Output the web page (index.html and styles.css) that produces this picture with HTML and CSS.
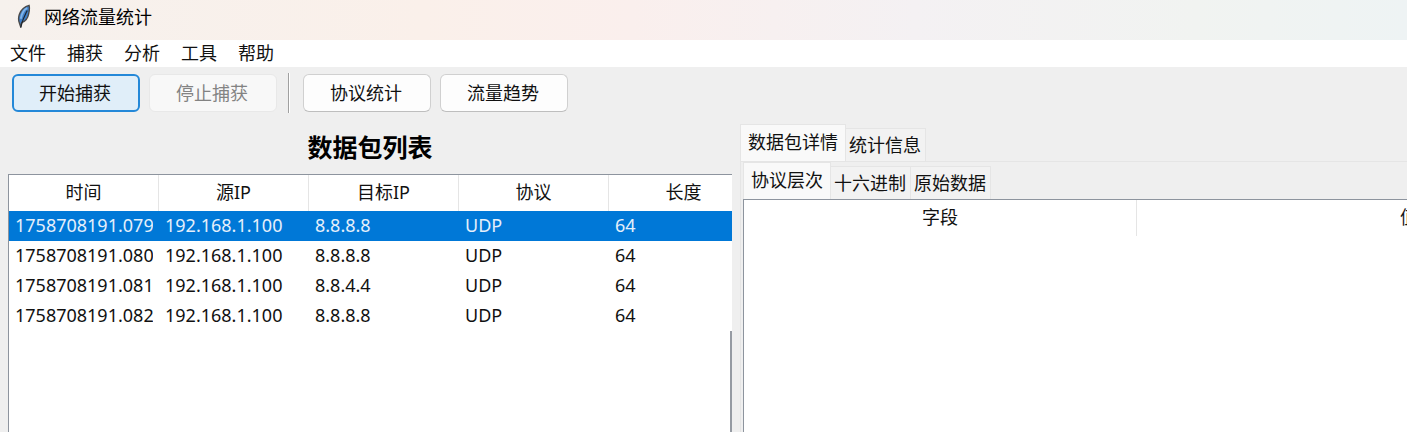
FILE: index.html
```html
<!DOCTYPE html>
<html lang="zh-CN">
<head>
<meta charset="utf-8">
<title>网络流量统计</title>
<link rel="stylesheet" href="styles.css">
</head>
<body>
<div class="window">
  <header class="titlebar">
    <svg class="feather" viewBox="0 0 16 26" aria-hidden="true">
      <path d="M13.5 1.5C9.5 2.5 5 6 3 11C1.800 14.500 2 18 3 20.500L4.500 25L5.500 20C9 19 12 16 13 11C13.800 7.500 14.200 4 13.500 1.500Z" fill="#3f7fc8" stroke="#4a4a4a" stroke-width="1.500"/>
      <path d="M11.500 4.500C8 6 5.500 10 4.500 16" fill="none" stroke="#7fb4ea" stroke-width="2"/>
      <path d="M11.500 7C9.500 11 7 15 4.500 25" fill="none" stroke="#1c2530" stroke-width="1.300"/>
    </svg>
    <h1 class="title">网络流量统计</h1>
  </header>
  <nav class="menubar">
    <button class="menu">文件</button>
    <button class="menu">捕获</button>
    <button class="menu">分析</button>
    <button class="menu">工具</button>
    <button class="menu">帮助</button>
  </nav>
  <div class="toolbar">
    <button class="btn btn-focus">开始捕获</button>
    <button class="btn" disabled>停止捕获</button>
    <span class="divider"></span>
    <button class="btn">协议统计</button>
    <button class="btn">流量趋势</button>
  </div>
  <main class="panes">
    <section class="packets">
      <h2 class="heading">数据包列表</h2>
      <div class="tree">
        <table class="grid packet-grid">
          <thead>
            <tr><th>时间</th><th>源IP</th><th>目标IP</th><th>协议</th><th>长度</th></tr>
          </thead>
          <tbody>
            <tr class="selected"><td><div class="clip">1758708191.079</div></td><td>192.168.1.100</td><td>8.8.8.8</td><td>UDP</td><td>64</td></tr>
            <tr><td><div class="clip">1758708191.080</div></td><td>192.168.1.100</td><td>8.8.8.8</td><td>UDP</td><td>64</td></tr>
            <tr><td><div class="clip">1758708191.081</div></td><td>192.168.1.100</td><td>8.8.4.4</td><td>UDP</td><td>64</td></tr>
            <tr><td><div class="clip">1758708191.082</div></td><td>192.168.1.100</td><td>8.8.8.8</td><td>UDP</td><td>64</td></tr>
          </tbody>
        </table>
        <div class="tree-rest"></div>
      </div>
    </section>
    <section class="details">
      <div class="tabs" role="tablist">
        <button class="tab active" role="tab" aria-selected="true">数据包详情</button>
        <button class="tab" role="tab" aria-selected="false">统计信息</button>
      </div>
      <div class="tab-page">
        <div class="tabs" role="tablist">
          <button class="tab active" role="tab" aria-selected="true">协议层次</button>
          <button class="tab" role="tab" aria-selected="false">十六进制</button>
          <button class="tab" role="tab" aria-selected="false">原始数据</button>
        </div>
        <div class="tree">
          <table class="grid field-grid">
            <thead><tr><th class="field">字段</th><th>值</th></tr></thead>
          </table>
        </div>
      </div>
    </section>
  </main>
</div>
</body>
</html>
```

FILE: styles.css
```css
* { box-sizing: border-box; }
body {
  margin: 0;
  background: #efefef;
  color: #111;
  font: 18px/24px "Noto Sans", "Noto Sans CJK SC", sans-serif;
}
button { font: inherit; color: inherit; margin: 0; }
.window {
  display: flex;
  flex-direction: column;
  height: 100vh;
  overflow: hidden;
}
.titlebar {
  display: flex;
  align-items: flex-start;
  gap: 12px;
  height: 40px;
  flex: none;
  padding: 4px 16px;
  background: linear-gradient(90deg, #f6f1ed, #faf0ea 30%, #faefed 45%, #f4f1f3 65%, #f1f3f1 85%, #eef3f4);
}
.feather { width: 16px; height: 24px; }
.title { margin: 0; font-size: 18px; font-weight: 400; line-height: 26px; color: #000; }
.menubar { display: flex; gap: 21px; height: 27px; flex: none; padding: 0 10px; background: #fff; }
.menu { border: 0; padding: 0; background: none; line-height: 27px; }
.toolbar { display: flex; align-items: center; gap: 9px; flex: none; padding: 6px 12px; height: 52px; }
.btn {
  width: 128px;
  height: 38px;
  padding: 0 2px 0 0;
  border: 1px solid #d0d0d0;
  border-bottom-color: #bebebe;
  border-radius: 6px;
  background: #fdfdfd;
}
.btn-focus { border: 2px solid #2488d8; background: #e0eef9; }
.btn:disabled { border-color: #e8e8e8; background: #f8f8f8; color: #838383; }
.divider { width: 2px; height: 40px; margin: 0 4px 0 2px; background: #a0a0a0; border-right: 1px solid #fff; }
.panes { display: flex; flex: 1; min-height: 0; gap: 8px; padding-left: 8px; }
.packets { display: flex; flex-direction: column; flex: 724 1 0; min-width: 0; }
.heading { margin: 0; padding: 12px 0 11px; text-align: center; font-size: 25px; line-height: 32px; color: #000; }
.tree {
  display: flex;
  flex-direction: column;
  flex: 1;
  min-height: 0;
  overflow: hidden;
  border: solid #8d949e;
  border-width: 1px 0 0 1px;
  background: #fff;
}
.tree-rest { flex: 1; border-right: 2px solid #969ba3; }
.grid { table-layout: fixed; border-collapse: separate; border-spacing: 0; flex: none; }
.grid th { height: 36px; padding: 0 0 2px; font-weight: 400; border-right: 1px solid #e5e5e5; }
.grid td { height: 30px; padding: 0 6px 2px; }
.packet-grid { width: 750px; }
.field-grid { width: 938px; }
.field { width: 393px; }
.clip { overflow: hidden; white-space: nowrap; }
.selected td { background: #0078d7; color: #e4effb; }
.details { display: flex; flex-direction: column; flex: 667 1 0; min-width: 0; padding-top: 5px; }
.tabs { display: flex; align-items: flex-end; }
.tab {
  height: 33px;
  padding: 0 4px 0 3px;
  border: 1px solid #e5e5e5;
  border-width: 1px 1px 0 0;
  background: #f2f2f2;
}
.tab.active { height: 37px; padding: 0 7px 2px; border-left-width: 1px; background: #f9f9f9; }
.tab-page {
  display: flex;
  flex-direction: column;
  flex: 1;
  min-height: 0;
  padding-left: 2px;
  border-top: 1px solid #e5e5e5;
  border-left: 1px solid #e5e5e5;
}
```
